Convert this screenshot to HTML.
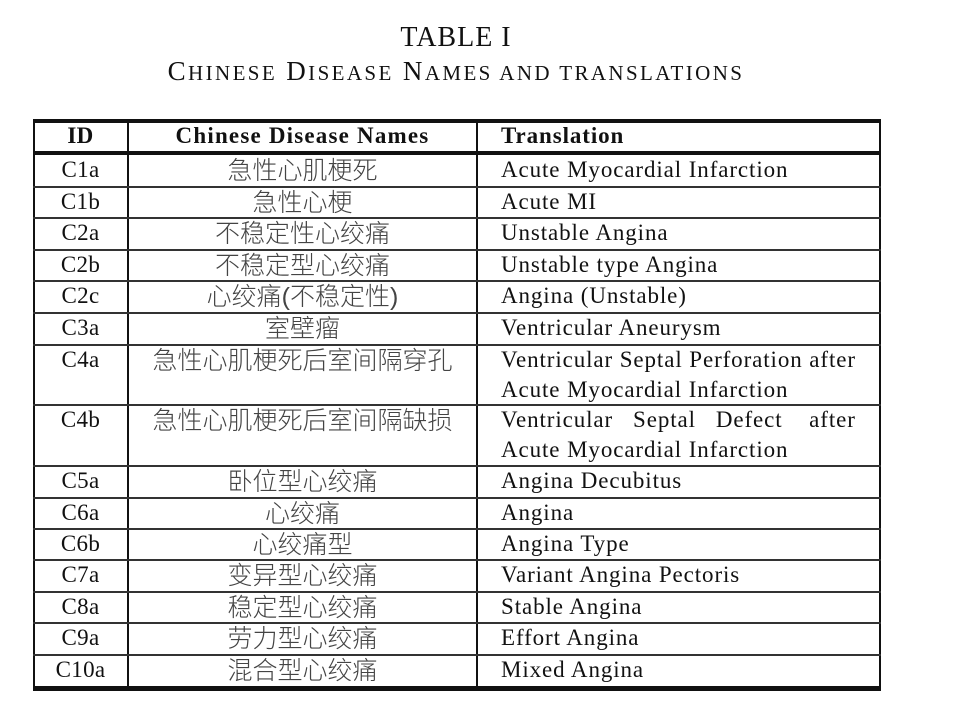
<!DOCTYPE html>
<html><head><meta charset="utf-8"><style>
body{margin:0;width:958px;height:718px;background:#fff;position:relative;overflow:hidden;font-family:"Liberation Serif",serif;color:#111}
.a{position:absolute;white-space:nowrap}
.h{position:absolute;background:#111}
.t{font-size:23px;letter-spacing:0.9px;line-height:30px}
.c{font-family:"Liberation Sans","Noto Sans CJK SC",sans-serif;font-size:25px;color:#444;text-align:center;width:349px;left:128px;line-height:30px;font-weight:300}
.id{width:95px;left:33px;text-align:center;letter-spacing:0.3px}
.tr{left:501px}
</style></head><body>
<div class="a" style="left:0;width:912px;text-align:center;top:22px;font-size:28px;letter-spacing:1px">TABLE I</div>
<div class="a" style="left:0;width:912px;text-align:center;top:56px;font-size:27px;letter-spacing:2.4px">C<span style="font-size:21px">HINESE</span> D<span style="font-size:21px">ISEASE</span> N<span style="font-size:21px">AMES AND TRANSLATIONS</span></div>

<div class="h" style="left:33px;width:848px;top:119px;height:4px"></div>
<div class="h" style="left:33px;width:848px;top:151px;height:4px"></div>
<div class="h" style="left:33px;width:848px;top:686px;height:5px"></div>
<div class="h" style="left:33px;width:2px;top:119px;height:570px"></div>
<div class="h" style="left:127px;width:2px;top:119px;height:570px"></div>
<div class="h" style="left:476px;width:2px;top:119px;height:570px"></div>
<div class="h" style="left:879px;width:2px;top:119px;height:570px"></div>

<div class="a t id" style="top:121px;font-weight:bold">ID</div>
<div class="a t" style="top:121px;left:128px;width:349px;text-align:center;font-weight:bold;letter-spacing:1.2px">Chinese Disease Names</div>
<div class="a t tr" style="top:121px;font-weight:bold">Translation</div>

<div id="rows"></div>
<script>
var rows=[
["C1a","急性心肌梗死","Acute Myocardial Infarction",155,187],
["C1b","急性心梗","Acute MI",187,218],
["C2a","不稳定性心绞痛","Unstable Angina",218,250],
["C2b","不稳定型心绞痛","Unstable type Angina",250,281],
["C2c","心绞痛(不稳定性)","Angina (Unstable)",281,313],
["C3a","室壁瘤","Ventricular Aneurysm",313,345],
["C4a","急性心肌梗死后室间隔穿孔","Ventricular Septal Perforation after<br>Acute Myocardial Infarction",345,405,1],
["C4b","急性心肌梗死后室间隔缺损","Ventricular&nbsp;&nbsp;&nbsp;Septal&nbsp;&nbsp;&nbsp;Defect&nbsp;&nbsp;&nbsp;&nbsp;after<br>Acute Myocardial Infarction",405,466,1],
["C5a","卧位型心绞痛","Angina Decubitus",466,498],
["C6a","心绞痛","Angina",498,529],
["C6b","心绞痛型","Angina Type",529,560],
["C7a","变异型心绞痛","Variant Angina Pectoris",560,592],
["C8a","稳定型心绞痛","Stable Angina",592,623],
["C9a","劳力型心绞痛","Effort Angina",623,655],
["C10a","混合型心绞痛","Mixed Angina",655,687]];
var h="";
rows.forEach(function(r,i){
 var y=r[3];
 h+='<div class="a t id" style="top:'+y+'px">'+r[0]+'</div>';
 h+='<div class="a c" style="top:'+(y+1)+'px">'+r[1]+'</div>';
 h+='<div class="a t tr" style="top:'+y+'px">'+r[2]+'</div>';
 if(i<rows.length-1) h+='<div class="h" style="left:33px;width:848px;top:'+(r[4]-1)+'px;height:2px;background:#333"></div>';
});
document.getElementById('rows').innerHTML=h;
</script>
</body></html>
